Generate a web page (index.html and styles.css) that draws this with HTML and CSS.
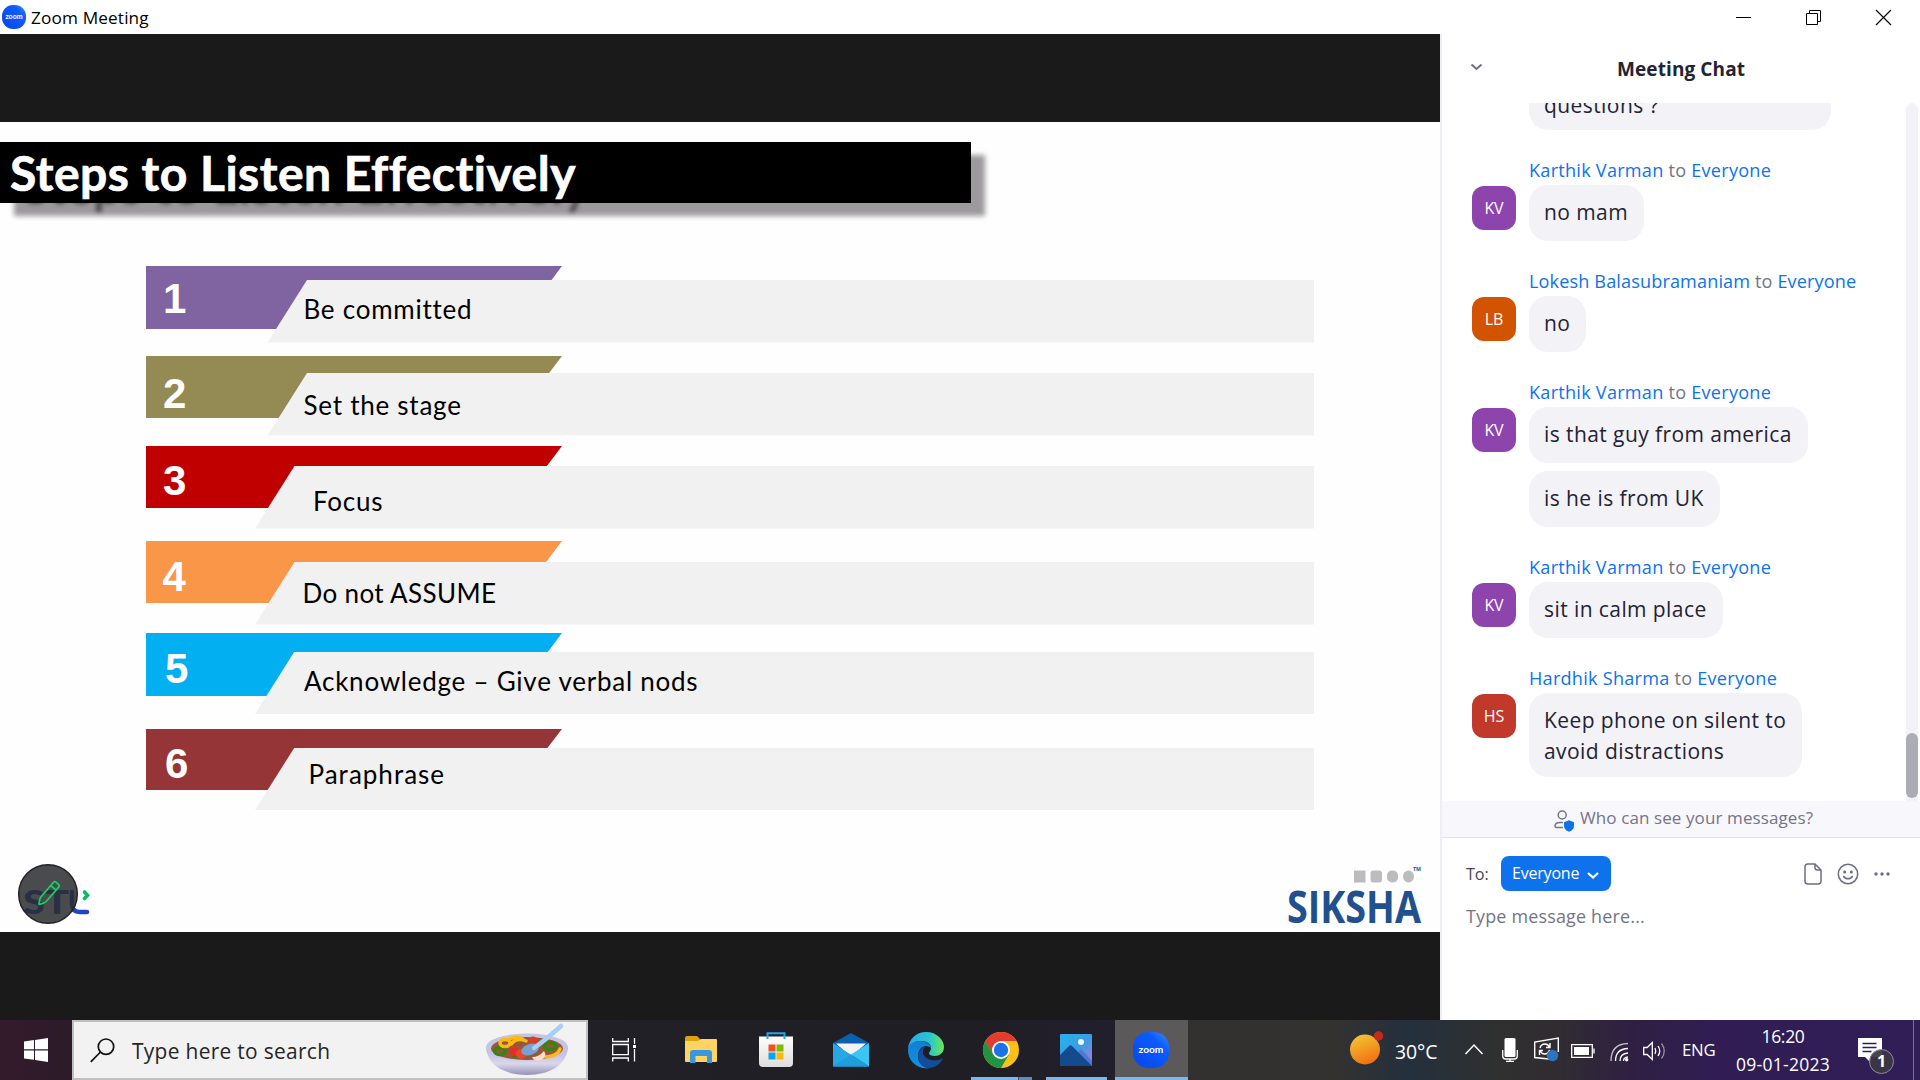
FILE: index.html
```html
<!DOCTYPE html>
<html lang="en">
<head>
<meta charset="utf-8">
<title>Zoom Meeting</title>
<link rel="stylesheet" href="styles.css">
</head>
<body>
<header class="titlebar">
  <svg class="app-icon" width="24" height="24" viewBox="0 0 24 24"><defs><linearGradient id="zb" x1="1" y1="0" x2="0" y2="1"><stop offset="0" stop-color="#3f8cff"/><stop offset=".3" stop-color="#0b5cff"/><stop offset="1" stop-color="#0845e8"/></linearGradient></defs><rect width="24" height="24" rx="11" fill="url(#zb)"/><text x="12" y="14" text-anchor="middle" class="zoom-word" font-size="7">zoom</text></svg>
  <span class="app-name">Zoom Meeting</span>
  <div class="window-buttons">
    <svg width="15" height="15"><path d="M0 7.5h15" stroke="#000"/></svg>
    <svg width="15" height="15" fill="none" stroke="#000"><path d="M.5 3.5h11v11H.5zM3.500 3.500V.5h11v11h-3"/></svg>
    <svg width="15" height="15" stroke="#000" stroke-width="1.200"><path d="M0 0l15 15M15 0L0 15"/></svg>
  </div>
</header>
<main class="workspace">
  <section class="share">
    <div class="slide">
      <h1 class="slide-title"><span>Steps to Listen Effectively</span></h1>
      <ol class="steps">
        <li class="step s1"><b class="tag">1</b><span class="panel">Be committed</span></li>
        <li class="step s2"><b class="tag">2</b><span class="panel">Set the stage</span></li>
        <li class="step s3"><b class="tag">3</b><span class="panel">Focus</span></li>
        <li class="step s4"><b class="tag">4</b><span class="panel">Do not ASSUME</span></li>
        <li class="step s5"><b class="tag">5</b><span class="panel">Acknowledge – Give verbal nods</span></li>
        <li class="step s6"><b class="tag">6</b><span class="panel">Paraphrase</span></li>
      </ol>
      <footer class="logos">
        <svg width="76" height="66" viewBox="16 862 76 66">
          <text x="23" y="914" class="stl" textLength="46" lengthAdjust="spacingAndGlyphs" fill="#2243c4">ST</text>
          <path d="M72 892v12q0 8 8 8h7" fill="none" stroke="#2243c4" stroke-width="4.500" stroke-linecap="round"/>
          <path d="M84.500 892l3 3.200-3 3.300" fill="none" stroke="#10b868" stroke-width="3.600" stroke-linecap="round"/>
          <circle cx="48" cy="894" r="29.300" fill="#2b2d30" fill-opacity=".86" stroke="#202329" stroke-width="1.500"/>
          <g transform="translate(48.500 893.500) rotate(41)" fill="none" stroke="#18cf61" stroke-width="1.700" stroke-linejoin="round"><path d="M-3.500-11.500q0-2 2-2h3q2 0 2 2V7.500Q3.500 9.500 0 14.500Q-3.500 9.500-3.500 7.500zM-3.500-7.500h7"/></g>
        </svg>
        <svg width="136" height="60" viewBox="1287 866 136 60">
          <g fill="#bcbcbf"><rect x="1354" y="870.500" width="11.500" height="12"/><rect x="1370.500" y="870.500" width="11.500" height="12" rx="3"/><rect x="1387" y="870.500" width="11" height="12" rx="5"/><ellipse cx="1408.500" cy="876.500" rx="5.500" ry="6"/></g>
          <text x="1413" y="871" class="siksha" font-size="5.500" textLength="8" lengthAdjust="spacingAndGlyphs">TM</text>
          <text x="1287" y="923" class="siksha" font-size="45" textLength="134" lengthAdjust="spacingAndGlyphs">SIKSHA</text>
        </svg>
      </footer>
    </div>
  </section>
  <aside class="chat">
    <header class="chat-head">
      <svg width="13" height="8" fill="none" stroke="#6e6e83" stroke-width="2"><path d="M1.500 1.500L6.500 6l5-4.500"/></svg>
      <h2>Meeting Chat</h2>
    </header>
    <div class="feed">
      <div class="messages">
        <div class="msg first"><div class="bubbles"><p class="wide">questions ?</p></div></div>
        <div class="msg"><i class="avatar kv">KV</i><div class="bubbles"><h3>Karthik Varman <em>to</em> Everyone</h3><p>no mam</p></div></div>
        <div class="msg"><i class="avatar lb">LB</i><div class="bubbles"><h3 class="lok">Lokesh Balasubramaniam <em>to</em> Everyone</h3><p>no</p></div></div>
        <div class="msg"><i class="avatar kv">KV</i><div class="bubbles"><h3>Karthik Varman <em>to</em> Everyone</h3><p>is that guy from america</p><p>is he is from UK</p></div></div>
        <div class="msg"><i class="avatar kv">KV</i><div class="bubbles"><h3>Karthik Varman <em>to</em> Everyone</h3><p>sit in calm place</p></div></div>
        <div class="msg"><i class="avatar hs">HS</i><div class="bubbles"><h3>Hardhik Sharma <em>to</em> Everyone</h3><p>Keep phone on silent to<br>avoid distractions</p></div></div>
      </div>
      <div class="track"><div class="thumb"></div></div>
    </div>
    <div class="privacy">
      <svg width="21" height="22" fill="none" stroke="#747487" stroke-width="1.500"><circle cx="8.200" cy="5" r="4"/><path d="M9 17.500H2.500q-1.500 0-1.500-1.500 0-3.500 5-3.500h3"/><path d="M15 10.200l5 2v3.500q0 4-5 6-5-2-5-6v-3.500z" fill="#0e72ed" stroke="none"/></svg>
      <span>Who can see your messages?</span>
    </div>
    <div class="compose">
      <div class="to-row">
        <span class="to">To:</span>
        <button class="recipient"><span>Everyone</span><svg width="12" height="9" fill="none" stroke="#fff" stroke-width="2.300"><path d="M1 2l5 4.500L11 2"/></svg></button>
        <svg class="file" width="18" height="22" fill="none" stroke="#6e6e83" stroke-width="1.500"><path d="M11 1H4Q1 1 1 4v14q0 3 3 3h10q3 0 3-3V7zM11 1v3.500Q11 7 13.500 7H17"/></svg>
        <svg class="smile" width="22" height="22" fill="none" stroke="#6e6e83" stroke-width="1.500"><circle cx="11" cy="11" r="9.700"/><circle cx="7.600" cy="9" r="1.500" fill="#6e6e83" stroke="none"/><circle cx="14.400" cy="9" r="1.500" fill="#6e6e83" stroke="none"/><path d="M6.300 13q1.700 2.800 4.700 2.800t4.700-2.800"/></svg>
        <svg class="dots" width="16" height="4" fill="#6e6e83"><circle cx="2" cy="2" r="1.700"/><circle cx="8" cy="2" r="1.700"/><circle cx="14" cy="2" r="1.700"/></svg>
      </div>
      <p class="placeholder">Type message here...</p>
    </div>
  </aside>
</main>
<footer class="taskbar">
  <div class="start"><svg width="24" height="24" fill="#fff"><path d="M0 3.500L10 2v9.300H0zM11 1.900L24 0v11.300H11zM0 12.400h10v9.300L0 20.500zM11 12.400h13V24l-13-2z"/></svg></div>
  <div class="search">
    <svg width="25" height="25" fill="none" stroke="#111" stroke-width="1.700"><circle cx="16" cy="8.700" r="7.700"/><path d="M10.500 14L.8 23.800"/></svg>
    <span>Type here to search</span>
    <svg class="bowl" width="84" height="52" viewBox="0 0 84 52">
      <defs><linearGradient id="bw" x1="0" y1="0" x2="0" y2="1"><stop offset="0" stop-color="#b4b4dc"/><stop offset=".6" stop-color="#d9d7ec"/><stop offset="1" stop-color="#9691b8"/></linearGradient></defs>
      <path d="M1 23C2 40 18 51 42 51S82 40 83 23z" fill="url(#bw)"/><ellipse cx="42" cy="23" rx="41" ry="13.500" fill="#c5c5e4"/><ellipse cx="42" cy="24.500" rx="36" ry="11.500" fill="#9a5638"/>
      <g fill="none" stroke-width="3.500"><ellipse cx="15" cy="27" rx="5.500" ry="3.500" stroke="#37850f"/><ellipse cx="65" cy="22" rx="6" ry="3.500" stroke="#37850f"/><path d="M28 31q4 2 10 2" stroke="#37850f"/><ellipse cx="20" cy="19" rx="5" ry="3.500" stroke="#ffb914"/><path d="M26 20q6-7 15-3M24 15q9-4 15 1M61 33q12-1 14-8" stroke="#ffb914" stroke-linecap="round"/></g>
      <circle cx="29" cy="27" r="4.500" fill="#e33124"/><circle cx="36" cy="30" r="5" fill="#ef4431"/><circle cx="48" cy="17" r="4.500" fill="#dd3b24"/>
      <path d="M47 33q7 0 12-6 4 6-3 9-7 2-9-3z" fill="#fbdcc8"/>
      <ellipse cx="45" cy="25.500" rx="9" ry="5.500" transform="rotate(-18 45 25.500)" fill="#78a3d0"/><path d="M49 24Q58 18 76 2" stroke="#a9cdf3" stroke-width="4.500" stroke-linecap="round"/>
    </svg>
  </div>
  <nav class="apps">
    <div class="slot views"><svg width="24" height="24" viewBox="0 0 24 24" fill="none" stroke="#fff" stroke-width="1.300"><path d="M.7 0v3.500h15.600V0M.7 6.500h15.600v10.200H.7zM.7 23.500V20h15.600v3.500M22.500 0v6M22.500 11v12.500"/><path d="M21 7h3v3h-3z" fill="#fff" stroke="none"/></svg></div>
    <div class="slot"><svg width="32" height="28" viewBox="0 0 32 28"><path d="M0 2q0-2 2-2h10l3 3v5H0z" fill="#e0a00f"/><path d="M0 5h13l3-2h15q1 0 1 1v21q0 1-1 1H1q-1 0-1-1z" fill="#ffd462"/><path d="M5 27V17q0-3 3-3h16q3 0 3 3v10h-5v-7H10.500v7z" fill="#3b97dd"/></svg></div>
    <div class="slot"><svg width="36" height="36" viewBox="0 0 36 36"><defs><linearGradient id="st" x1="0" y1="0" x2="0" y2="1"><stop offset="0" stop-color="#fff"/><stop offset="1" stop-color="#ddd"/></linearGradient></defs><path d="M1 4.500h34V31q0 4-4 4H5q-4 0-4-4z" fill="url(#st)"/><path d="M9.500 7V1.200h17V7" fill="none" stroke="#22a7ec" stroke-width="2"/><path d="M10.500 12.500h7v7h-7z" fill="#f1511b"/><path d="M18.500 12.500h7v7h-7z" fill="#80bb03"/><path d="M10.500 20.500h7v7h-7z" fill="#05a5f0"/><path d="M18.500 20.500h7v7h-7z" fill="#fdba08"/></svg></div>
    <div class="slot"><svg width="36" height="34" viewBox="0 0 36 34"><path d="M0 10L18 0l18 10v4H0z" fill="#0a5fae"/><path d="M3 10.500h30L18 24z" fill="#f3f3f5"/><path d="M0 10l36 23.500H0z" fill="#27a8e4"/><path d="M36 10v23.500L18 21.500z" fill="#3ac6f3"/><path d="M0 33.500h36L18 21.500z" fill="#209ddd"/></svg></div>
    <div class="slot"><svg width="36" height="36" viewBox="0 0 36 36"><defs><linearGradient id="e1"><stop offset="0" stop-color="#2ba9e8"/><stop offset=".6" stop-color="#2bc3d2"/><stop offset="1" stop-color="#6bea4e"/></linearGradient><linearGradient id="e2" x1="0" y1="0" x2="0" y2="1"><stop offset="0" stop-color="#127fd4"/><stop offset="1" stop-color="#1292e2"/></linearGradient></defs><path d="M0 17C1 6 9 0 18 0c11 0 18 8 18 15 0 6-5 9-9 9-4 0-6-1-6-3 0-1 2-2 2-5 0-4-4-7-10-7C7 9 2 12 0 17z" fill="url(#e1)"/><path d="M0 18C0 12 6 9 12 9c7 0 11 4 11 7-1-1-3-2-5-2-4 0-8 4-8 10 0 7 5 12 12 12C9 38 0 29 0 18z" fill="url(#e2)"/><path d="M18 14c-5 2-8 6-8 11 0 6 5 11 11 11 6 0 11-4 13-8 1-2 0-2-1-1-8 4-19-1-18-8 0-2 1-4 3-5z" fill="#114d9b"/></svg></div>
    <div class="slot run more"><svg width="36" height="36" viewBox="0 0 36 36"><circle cx="18" cy="18" r="18" fill="#fbc116"/><path d="M2.400 9A18 18 0 0 1 33.600 9H18L10 22.500z" fill="#e33b2e"/><path d="M2.400 9A18 18 0 0 0 18 36l8-13.500L18 26.500 10.200 22.500z" fill="#229342"/><circle cx="18" cy="18" r="9" fill="#fff"/><circle cx="18" cy="18" r="7.200" fill="#1a73e8"/></svg></div>
    <div class="slot run"><svg width="32" height="32" viewBox="0 0 32 32"><defs><linearGradient id="ph" x1="0" y1="0" x2="1" y2="1"><stop offset="0" stop-color="#25b3ec"/><stop offset=".5" stop-color="#3b9de4"/><stop offset="1" stop-color="#b078df"/></linearGradient></defs><rect width="32" height="32" rx="1" fill="url(#ph)"/><path d="M14 23l6-7q1-1 2 0l10 11v5H16z" fill="#4d79d4"/><path d="M0 21L9 12q1.500-1.500 3 0l20 20H0z" fill="#144b8f"/><circle cx="21" cy="8" r="3" fill="#f2f6ff"/></svg></div>
    <div class="slot run active"><svg width="36" height="36" viewBox="0 0 24 24"><rect width="24" height="24" rx="10" fill="url(#zb)"/><text x="12" y="13.800" text-anchor="middle" class="zoom-word" font-size="6.800">zoom</text></svg></div>
  </nav>
  <div class="tray">
    <svg class="sun" width="34" height="34" viewBox="0 0 34 34"><defs><linearGradient id="sn" x1=".2" y1="0" x2=".6" y2="1"><stop offset="0" stop-color="#f4c636"/><stop offset="1" stop-color="#f0700f"/></linearGradient></defs><circle cx="15" cy="18.500" r="15" fill="url(#sn)"/><circle cx="28.500" cy="5" r="4.700" fill="#c42b1c"/></svg>
    <span class="temp">30°C</span>
    <svg class="up" width="18" height="11" fill="none" stroke="#fff" stroke-width="1.500"><path d="M.5 10L9 1l8.500 9"/></svg>
    <svg class="mic" width="16" height="24" fill="none" stroke="#fff" stroke-width="1.300"><rect x="2.500" y="0" width="11" height="19" rx="1.500" fill="#fff" stroke="none"/><path d="M.7 12v6q0 3 3 3h8.600q3 0 3-3v-6M8 21v3M4 23.400h8"/></svg>
    <svg class="sync" width="26" height="25" fill="none" stroke="#fff" stroke-width="1.400"><path d="M15 22L.7 20.500V5L24.300 1v14"/><path d="M6 11q1-4 5-4 3 0 4.500 3M16 6v4.500h-4M15.500 13q-1 4-5 4-3 0-4-3M5.500 18v-4.500H9"/><circle cx="18.500" cy="18.500" r="5.700" fill="#2b74c0" stroke="none"/></svg>
    <svg class="batt" width="24" height="14" fill="none" stroke="#fff" stroke-width="1.300"><path d="M.7.7h20.600v12.600H.7zM23 4.500v5"/><path d="M3 3h15v8H3z" fill="#fff" stroke="none"/></svg>
    <svg class="wifi" width="20" height="20" fill="none" stroke="#fff" stroke-width="1.300"><path d="M1 19Q1 2 18 1.500" opacity=".7"/><path d="M5.500 19Q5.500 7 18 6.500M10 19q0-7.500 8-8"/><path d="M13.500 19q0-3.500 4.500-4" /><circle cx="16.700" cy="17.700" r="1.700" fill="#fff" stroke="none"/></svg>
    <svg class="vol" width="24" height="20" fill="none" stroke="#fff" stroke-width="1.300"><path d="M.7 6.500h3.500L9.300 1.500v17l-5.100-5H.7z"/><path d="M12 7q1.500 3 0 6M15 5q3.500 5 0 10"/><path d="M18.500 2.500q5.500 7.500 0 15" opacity=".5"/></svg>
    <span class="lang">ENG</span>
    <div class="clock"><span>16:20</span><span class="date">09-01-2023</span></div>
    <svg class="notif" width="38" height="38" viewBox="0 0 38 38"><path d="M1 2h24v19H14v6l-6-6H1z" fill="#fff"/><path d="M5.500 7.500h14M5.500 11.500h14M5.500 15.500h9" stroke="#2d1d50" stroke-width="1.300"/><circle cx="24.500" cy="25.500" r="12" fill="#3a3744" fill-opacity=".93" stroke="#8e8a9c"/><text x="24.500" y="31" text-anchor="middle" class="count">1</text></svg>
    <div class="peek"></div>
  </div>
</footer>
</body>
</html>
```
FILE: styles.css
```css
* { box-sizing: border-box; margin: 0; padding: 0; }
svg { display: block; flex: none; overflow: visible; }
body { width: 1920px; height: 1080px; overflow: hidden; background: #fff; color: #232333; font-family: "Open Sans", "Noto Sans", sans-serif; white-space: nowrap; }
.zoom-word { fill: #fff; font-family: Lato, sans-serif; font-weight: 700; }

.titlebar { height: 34px; display: flex; align-items: center; padding: 0 29px 0 2px; color: #000; }
.app-name { margin-left: 5px; font-size: 17.2px; letter-spacing: .15px; }
.window-buttons { margin-left: auto; display: flex; gap: 55px; }

.workspace { height: 986px; display: flex; }
.share { width: 1440px; background: #1a1a1a; padding-top: 88px; }
.slide { height: 810px; background: #fefefe; padding-top: 20px; display: flex; flex-direction: column; font-family: Lato, "Open Sans", sans-serif; color: #000; }
.slide-title { width: 971px; height: 61px; flex: none; padding-left: 10px; background: #000; color: #fff; font-size: 48px; line-height: 61px; font-weight: 700; letter-spacing: .5px; -webkit-text-stroke: .7px #fff; box-shadow: 14px 13px 5px #9d9a9d; text-shadow: 13px 13px 4px rgba(0, 0, 0, .5); }
.steps { list-style: none; margin: 63px 0 0 146px; }
.step { display: grid; width: 1168px; align-items: start; margin-bottom: var(--gap); }
.tag, .panel { grid-area: 1 / 1; }
.tag { width: 416px; height: var(--th, 62px); padding: var(--ty) 0 0 var(--tx, 17px); background: var(--color); color: #fff; font: 700 42px/42px "Liberation Sans", sans-serif; clip-path: polygon(0 0, 100% 0, calc(100% - 47px) 100%, 0 100%); }
.panel { height: 62.5px; margin: var(--py) 0 0 var(--px, 109px); padding: var(--ly) 0 0 var(--lx); background: #f1f1f1; font-size: 26px; line-height: 30px; letter-spacing: var(--ls, .75px); clip-path: polygon(39.5px 0, 100% 0, 100% 100%, 0 100%); }
.s1 { --color: #8064a2; --gap: 13.5px; --th: 63px; --ty: 11.5px; --py: 14px; --px: 121.5px; --ly: 14px; --lx: 36px; }
.s2 { --color: #948a54; --gap: 10.5px; --ty: 16.5px; --py: 17px; --px: 121.5px; --ly: 17px; --lx: 36px; }
.s3 { --color: #c00000; --gap: 12.5px; --ty: 14px; --py: 20px; --ly: 19.5px; --lx: 58px; }
.s4 { --color: #f99648; --gap: 8.5px; --tx: 16.5px; --ty: 14.5px; --py: 21px; --ly: 16px; --lx: 47.5px; --ls: .35px; }
.s5 { --color: #02b0f2; --gap: 15px; --th: 63px; --tx: 19px; --ty: 14.5px; --py: 18.5px; --ly: 14px; --lx: 49px; }
.s6 { --color: #953537; --gap: 0; --th: 61px; --tx: 19px; --ty: 13.5px; --py: 18.5px; --ly: 11.5px; --lx: 53.5px; --ls: 1px; }
.logos { margin-top: auto; display: flex; justify-content: space-between; align-items: flex-end; padding: 0 17px 4px 16px; }
.logos svg:last-child { margin-bottom: 2px; }
.stl { font: 900 33px Lato, sans-serif; }
.siksha { fill: #21508f; font-family: "Open Sans", sans-serif; font-weight: 700; }

.chat { width: 480px; border-left: 2px solid #eeeef5; display: flex; flex-direction: column; }
.chat-head { height: 69px; display: flex; align-items: center; padding: 1px 0 0 28px; }
.chat-head svg { margin-bottom: 4px; }
.chat-head h2 { margin-left: 134px; font-size: 19px; font-weight: 700; letter-spacing: .1px; }
.feed { height: 698px; display: flex; justify-content: space-between; overflow: hidden; }
.messages { padding-left: 30px; }
.msg { display: flex; margin-bottom: 23px; }
.msg.first { margin-top: -57px; padding-left: 44px; }
.bubbles { display: flex; flex-direction: column; align-items: flex-start; margin-left: 13px; }
.bubbles h3 { height: 32px; padding-top: 5px; font-size: 18.1px; line-height: 25px; font-weight: 400; letter-spacing: .25px; color: #0e72ed; }
.bubbles .lok { letter-spacing: .13px; }
.bubbles em { font-style: normal; color: #747487; }
.bubbles p { min-height: 56px; padding: 12px 16px 10px 15px; border-radius: 19px; background: #f2f2f7; font-size: 21px; line-height: 31px; letter-spacing: .42px; }
.bubbles p + p { margin-top: 8px; }
.bubbles .wide { width: 302px; height: 84px; padding-top: 44px; }
.avatar { width: 44px; height: 44px; margin-top: 33px; border-radius: 12px; color: #fff; font-size: 16px; line-height: 44px; font-style: normal; text-align: center; letter-spacing: -.1px; }
.kv { background: #8e44ad; }
.lb { background: #d35400; }
.hs { background: #c0392b; }
.track { width: 12px; margin-right: 2px; padding-top: 630px; background: #f2f2f7; border-radius: 6px 6px 0 0; }
.thumb { height: 65px; border-radius: 6px; background: #acacb6; }
.privacy { height: 37px; display: flex; align-items: center; padding-left: 112px; background: #f7f7fc; border-bottom: 1px solid #e4e4ed; color: #747487; font-size: 17px; letter-spacing: .1px; }
.privacy svg { margin-top: 4px; }
.privacy span { margin-left: 5px; margin-top: -3px; }
.compose { padding: 18px 0 0 24px; }
.to-row { height: 35px; display: flex; align-items: center; }
.to { width: 35px; font-size: 16.2px; letter-spacing: -.1px; color: #444453; }
.recipient { width: 110px; height: 35px; border: 0; border-radius: 8px; background: #0e72ed; color: #fff; font: 16px "Open Sans", sans-serif; display: flex; align-items: center; padding: 0 0 1px 11px; }
.recipient span { width: 75px; letter-spacing: -.2px; text-align: left; }
.recipient svg { margin-top: 4px; }
.file { margin-left: 193px; }
.smile { margin-left: 14.5px; }
.dots { margin-left: 15.5px; }
.placeholder { margin-top: 13px; font-size: 17.9px; line-height: 25px; letter-spacing: .2px; color: #747487; }

.taskbar { height: 60px; display: flex; color: #fff; background: linear-gradient(90deg, #341b2c 0, #2c1b28 72px, #202026 588px, #201e25 1000px, #221f2d 1110px, #33312f 1190px, #34322f 1330px, #24303d 1410px, #30302f 1500px, #302c32 1560px, #2f2042 1630px, #311d54 1720px, #301e57 100%); }
.start { width: 72px; padding: 18px 0 0 24px; }
.search { width: 516px; border: 2px solid #c0c0c0; background: #f2f2f2; color: #262626; display: flex; align-items: center; padding: 0 17px 0 16px; font-size: 20.9px; letter-spacing: .32px; }
.search span { margin: 2px 0 0 17px; }
.bowl { margin-left: auto; }
.apps { width: 602px; display: flex; }
.slot { width: 75px; display: grid; place-items: center; flex: none; }
.views { padding-right: 4px; }
.run { background: linear-gradient(#78b8ea, #78b8ea) no-repeat 8px 57px / 61px 3px; }
.more { background: linear-gradient(90deg, #78b8ea 47px, #3f5468 47px 48px, #608db3 48px) no-repeat 8px 57px / 61px 3px; }
.active { width: 73px; margin-left: 2px; padding-right: 2px; background: linear-gradient(#5b595a 57px, #78b8ea 57px); }
.tray { flex: 1; display: flex; align-items: flex-start; }
.tray > * { flex: none; }
.sun { margin: 11px 0 0 160px; }
.temp { width: 70px; margin: 18px 0 0 11px; font-size: 19.4px; line-height: 28px; letter-spacing: -.1px; }
.up { margin-top: 24px; }
.mic { margin: 18px 0 0 19px; }
.sync { margin: 17px 0 0 16px; }
.batt { margin: 24px 0 0 11px; }
.wifi { margin: 22px 0 0 15px; }
.vol { margin: 21px 0 0 13px; }
.lang { width: 42px; margin: 17px 0 0 15px; font-size: 16.8px; line-height: 26px; letter-spacing: -.2px; }
.clock { width: 118px; display: flex; flex-direction: column; align-items: center; font-size: 17.5px; line-height: 28px; margin-top: 2px; letter-spacing: -.3px; }
.clock .date { letter-spacing: .25px; }
.notif { margin: 16px 0 0 15px; }
.count { fill: #fff; font: 700 16px "Open Sans", sans-serif; }
.peek { width: 1px; height: 60px; margin-left: 18px; background: #77709a; }
```
